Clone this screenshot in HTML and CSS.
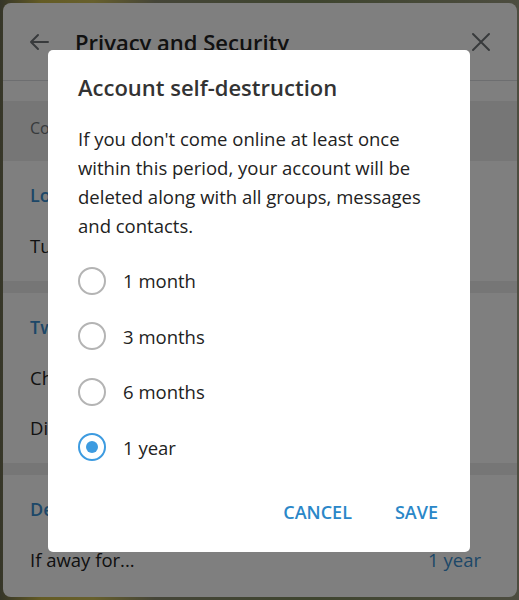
FILE: index.html
```html
<!DOCTYPE html>
<html lang="en">
<head>
<meta charset="utf-8">
<title>Privacy and Security</title>
<link rel="stylesheet" href="styles.css">
</head>
<body>
<div class="wallpaper">
  <div class="panel">
    <header class="panel-head">
      <svg class="icon" width="24" height="24" viewBox="0 0 24 24"><path d="M21 12H4M11 5l-7 7 7 7" fill="none" stroke="#707579" stroke-width="2" stroke-linecap="round" stroke-linejoin="round"/></svg>
      <h1 class="panel-title">Privacy and Security</h1>
      <svg class="icon close" width="24" height="24" viewBox="0 0 24 24"><path d="M4 4l16 16M20 4L4 20" fill="none" stroke="#707579" stroke-width="2" stroke-linecap="round"/></svg>
    </header>
    <div class="spacer"></div>
    <p class="caption">Control who can see your phone number and contacts.</p>
    <section class="section">
      <h2 class="sec-title">Login Email</h2>
      <div class="row">Turn on login via email</div>
    </section>
    <section class="section">
      <h2 class="sec-title">Two-Step Verification</h2>
      <div class="row">Change Password</div>
      <div class="row">Disable Password</div>
    </section>
    <section class="section last">
      <h2 class="sec-title">Delete my account</h2>
      <div class="row split"><span>If away for...</span><span class="val">1 year</span></div>
    </section>
  </div>
</div>
<div class="overlay"></div>
<div class="dialog" role="dialog">
  <h3 class="d-title">Account self-destruction</h3>
  <p class="d-text">If you don't come online at least once within this period, your account will be deleted along with all groups, messages and contacts.</p>
  <div class="options">
    <label class="opt"><span class="radio"></span>1 month</label>
    <label class="opt"><span class="radio"></span>3 months</label>
    <label class="opt"><span class="radio"></span>6 months</label>
    <label class="opt"><span class="radio on"></span>1 year</label>
  </div>
  <div class="actions">
    <button class="btn">CANCEL</button>
    <button class="btn">SAVE</button>
  </div>
</div>
</body>
</html>
```
FILE: styles.css
```css
* { box-sizing: border-box; }
html, body { margin: 0; padding: 0; }
body {
  font-family: "Open Sans", "Liberation Sans", sans-serif;
  width: 519px;
  height: 600px;
  overflow: hidden;
  color: #222;
}
.wallpaper {
  height: 600px;
  padding: 3px 2px 3px 3px;
  background: linear-gradient(90deg, #6b6b52 0%, #c9b84a 8%, #cfc05a 18%, #8a8a70 30%, #7e8a5e 60%, #9a9a80 100%);
}
.panel {
  height: 594px;
  background: #fff;
  border-radius: 8px;
  overflow: hidden;
  display: flex;
  flex-direction: column;
}
.panel-head {
  height: 78px;
  flex: none;
  display: flex;
  align-items: center;
  padding: 0 24px 0 24px;
  border-bottom: 1px solid #dadce0;
}
.panel-head .icon { flex: none; }
.panel-title {
  margin: 0 0 0 24px;
  font-size: 22px;
  font-weight: 600;
  flex: 1;
}
.spacer { height: 20px; flex: none; }
.caption {
  margin: 0;
  height: 60px;
  flex: none;
  background: #ececec;
  color: #707579;
  font-size: 16px;
  padding: 16px 27px 0;
  white-space: nowrap;
}
.section {
  flex: none;
  padding: 20px 0 11px;
  border-bottom: 12px solid #ececec;
}
.section.last { border-bottom: 0; }
.sec-title {
  margin: 0 0 11px;
  padding: 0 27px;
  height: 28px;
  line-height: 28px;
  font-size: 18px;
  font-weight: 600;
  color: #3a8fd0;
}
.row {
  height: 50px;
  padding: 0 36px 0 27px;
  display: flex;
  align-items: center;
  font-size: 18.5px;
  color: #222;
}
.split { justify-content: space-between; }
.val { color: #3a8fd0; }

.overlay {
  position: fixed;
  inset: 0;
  background: rgba(0, 0, 0, 0.5);
}
.dialog {
  position: fixed;
  left: 48px;
  top: 50px;
  width: 422px;
  height: 502px;
  background: #fff;
  border-radius: 5px;
  padding: 22px 22px 20px 30px;
  display: flex;
  flex-direction: column;
}
.d-title {
  margin: 0;
  height: 30px;
  line-height: 30px;
  font-size: 22px;
  font-weight: 600;
  color: #333;
}
.d-text {
  margin: 22px 0 0;
  font-size: 18.5px;
  line-height: 29px;
  color: #222;
}
.options {
  margin-top: 13px;
  display: flex;
  flex-direction: column;
}
.opt {
  height: 55.5px;
  display: flex;
  align-items: center;
  gap: 17px;
  font-size: 18.5px;
  color: #222;
}
.radio {
  width: 28px;
  height: 28px;
  border-radius: 50%;
  border: 2px solid #b4b4b4;
  flex: none;
  display: flex;
  align-items: center;
  justify-content: center;
}
.radio.on { border-color: #3d9be0; }
.radio.on::after {
  content: "";
  width: 12px;
  height: 12px;
  border-radius: 50%;
  background: #3d9be0;
}
.actions {
  margin-top: auto;
  display: flex;
  justify-content: flex-end;
  gap: 23px;
}
.btn {
  font-family: inherit;
  background: none;
  border: 0;
  height: 40px;
  padding: 0 10px;
  font-size: 18px;
  font-weight: 600;
  color: #2a87c8;
}
```
